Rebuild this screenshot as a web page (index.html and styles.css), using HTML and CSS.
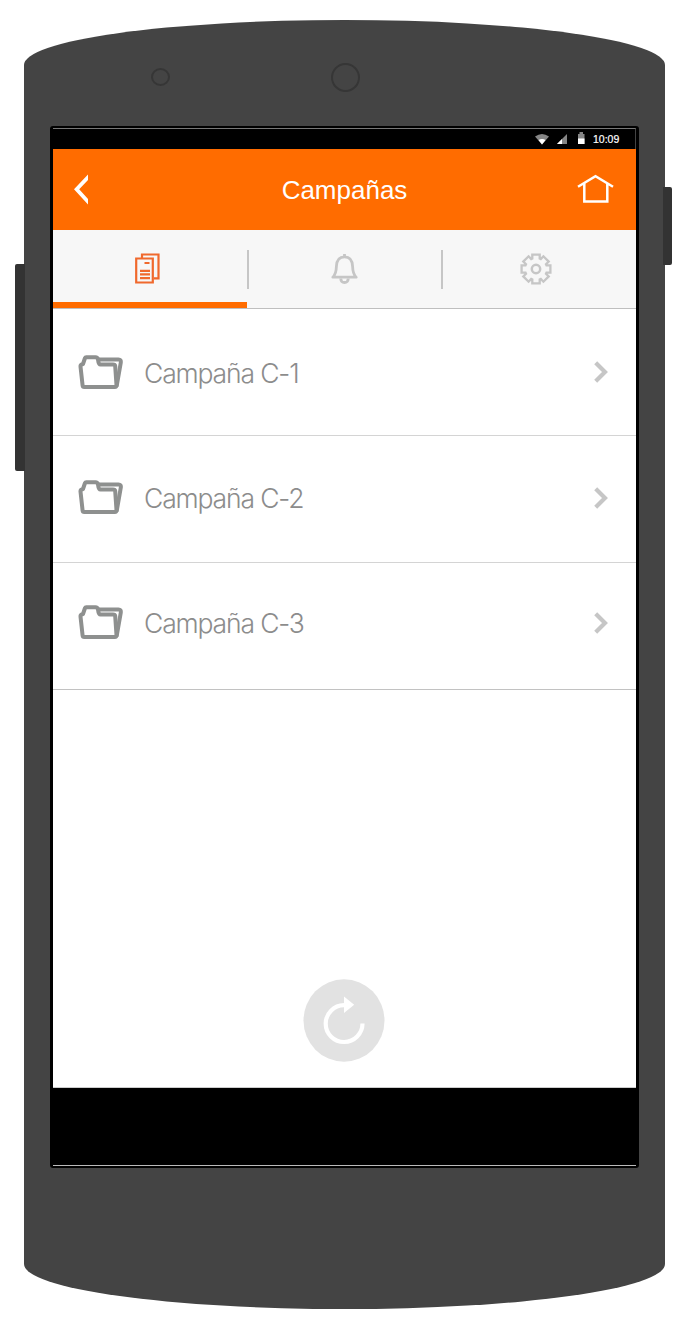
FILE: index.html
```html
<!DOCTYPE html>
<html lang="es">
<head>
<meta charset="utf-8">
<title>Campañas</title>
<link rel="stylesheet" href="styles.css">
</head>
<body>
<svg class="defs" aria-hidden="true">
  <symbol id="folder" viewBox="0 0 46 35">
    <g fill="none" stroke="#8e908f" stroke-width="4" stroke-linejoin="round">
      <path d="M20 4.400H40.500Q43.300 4.400 42.800 7.500L38.600 31.500"/>
      <path d="M2.500 11.500Q2.300 9.800 5 9L7 3Q7.300 2.300 8.200 2.300H17.500Q19.500 2.300 20 4.500Q20.500 9.500 22.500 9.500H35Q37 9.500 37.200 11L38.500 30Q38.500 32 36.800 32H6.200Q4.800 32 4.600 30.500Z"/>
    </g>
  </symbol>
  <symbol id="chevron" viewBox="0 0 14 22">
    <path d="M1.700 1.700L11 11L1.700 20.300" fill="none" stroke="#c6c6c6" stroke-width="4.200"/>
  </symbol>
</svg>
<div class="phone">
  <i class="key volume"></i>
  <i class="key power"></i>
  <i class="sensor"></i>
  <i class="camera"></i>
  <main class="screen">
    <div class="status">
      <svg class="signals" width="51" height="14" viewBox="0 0 51 14">
        <path d="M0 3.500Q7 -1.500 14 3.500L7 11.500Z" fill="#858585"/>
        <path d="M3.500 7Q7 5 10.500 7L7 11.500Z" fill="#fff"/>
        <path d="M22 11L32 1V11Z" fill="#858585"/>
        <path d="M22 11L27 6V11Z" fill="#fff"/>
        <path d="M43 1H44.500V-1H48V1H49.500V11H43Z" fill="#858585"/>
        <path d="M43 5.500H49.500V11H43Z" fill="#fff"/>
      </svg>
      <span class="clock">10:09</span>
    </div>
    <header class="bar">
      <svg class="back" width="14" height="31" viewBox="0 0 14 31"><path d="M0 15.300L14 .5V6L5.200 15.300L14 25V30.500Z" fill="#fff"/></svg>
      <h1 class="title">Campañas</h1>
      <svg class="home" width="37" height="30" viewBox="0 0 37 30"><path d="M1 11.800L18.500 1.200L36 11.800M7.300 8V26.500H30.300V8" fill="none" stroke="#fff" stroke-width="2.500"/></svg>
    </header>
    <nav class="tabs">
      <a class="tab active">
        <svg width="25" height="31" viewBox="0 0 25 31"><g fill="none" stroke="#f0692d" stroke-width="2.200"><path d="M7 5V1.500H23.500V25.300H19"/><path d="M1.200 5.500H17.800V29.500H1.200Z"/><path d="M9.500 10H14.500M5 17.800H15M5 21.400H15M5 25.200H15"/></g></svg>
      </a>
      <a class="tab">
        <svg width="27" height="31" viewBox="0 0 27 31"><g fill="none" stroke="#c6c6c6" stroke-width="2.800" stroke-linejoin="round"><path d="M1.800 23.200Q5.200 20 5.400 12.500Q5.700 2.800 13.500 2.800Q21.300 2.800 21.600 12.500Q21.800 20 25.200 23.200Z"/><path d="M13.500 0V3M9.700 24.500Q10 28.500 13.500 28.500Q17 28.500 17.300 24.500"/></g></svg>
      </a>
      <a class="tab settings">
        <svg width="32" height="32" viewBox="-16 -16 32 32"><g fill="none" stroke="#c6c6c6" stroke-width="2.300"><path d="M-3.700 -10.500V-14.400H3.700V-10.500L4.800 -10L7.400 -12.700L12.700 -7.400L10 -4.800L10.500 -3.700H14.400V3.700H10.500L10 4.800L12.700 7.400L7.400 12.700L4.800 10L3.700 10.500V14.400H-3.700V10.500L-4.800 10L-7.400 12.700L-12.700 7.400L-10 4.800L-10.500 3.700H-14.400V-3.700H-10.500L-10 -4.800L-12.700 -7.400L-7.400 -12.700L-4.800 -10Z"/><circle r="4.200" stroke-width="2.500"/></g></svg>
      </a>
    </nav>
    <ul class="list">
      <li class="row"><svg class="folder"><use href="#folder"/></svg><span class="label">Campaña C-1</span><svg class="chevron"><use href="#chevron"/></svg></li>
      <li class="row"><svg class="folder"><use href="#folder"/></svg><span class="label">Campaña C-2</span><svg class="chevron"><use href="#chevron"/></svg></li>
      <li class="row"><svg class="folder"><use href="#folder"/></svg><span class="label">Campaña C-3</span><svg class="chevron"><use href="#chevron"/></svg></li>
    </ul>
    <div class="space">
      <svg width="82" height="83" viewBox="0 0 82 83"><ellipse cx="41" cy="41.500" rx="40.500" ry="41.200" fill="#e2e2e2"/><path d="M41 26.200A18.400 18.400 0 1 0 59.500 44.500" fill="none" stroke="#fff" stroke-width="4.200"/><path d="M41 17.500L51.200 25.700L41 34Z" fill="#fff"/></svg>
    </div>
    <div class="softkeys"></div>
  </main>
</div>
</body>
</html>
```

FILE: styles.css
```css
* { box-sizing: border-box; }
body { margin: 0; background: #fff; font-family: "Liberation Sans", Arial, sans-serif; }
svg { display: block; flex: none; overflow: visible; }
.defs { position: absolute; width: 0; height: 0; overflow: hidden; }

/* Handset */
.phone {
  position: relative;
  width: 641px;
  height: 1289px;
  margin: 20px 0 0 24px;
  padding: 106px 26px 0;
  background: #444;
  border-radius: 320.5px / 45px;
}
.key { position: absolute; background: #333; }
.volume { left: -9px; top: 244px; width: 10px; height: 207px; border-radius: 2px 0 0 2px; }
.power { left: 639px; top: 167px; width: 9px; height: 78px; border-radius: 0 2px 2px 0; }
.sensor, .camera { position: absolute; border: 2px solid #363636; border-radius: 50%; }
.sensor { left: 127px; top: 48px; width: 19px; height: 18px; }
.camera { left: 307px; top: 43px; width: 29px; height: 29px; }

/* Screen */
.screen {
  display: flex;
  flex-direction: column;
  width: 589px;
  height: 1042px;
  border: solid #000;
  border-width: 2px 3px 2px;
  border-radius: 3px;
  background: #fff;
}
.status {
  display: flex;
  height: 21px;
  padding: 4px 15px 0 0;
  justify-content: flex-end;
  background: #000;
  border: solid #444;
  border-width: 1px 1px 0 0;
  border-top-color: #777;
}
.clock { margin-left: 7px; width: 27px; font-size: 10.500px; line-height: 12px; color: #fff; -webkit-text-stroke: .2px #fff; }
.bar {
  display: flex;
  align-items: center;
  justify-content: space-between;
  height: 81px;
  padding: 0 22px 0 21px;
  background: #ff6c00;
}
.title { margin: 0 0 0 24px; font-size: 26px; line-height: 30px; font-weight: 400; color: #fff; }
.tabs { display: grid; grid-template-columns: 194px 194px 195px; height: 79px; background: #f7f7f7; border-bottom: 1px solid #bfbfbf; }
.tab { position: relative; display: flex; justify-content: center; align-items: center; }
.active { border-bottom: 6px solid #ff6c00; padding-top: 5px; padding-right: 5px; }
.tab + .tab { padding-left: 1px; }
.tab.settings { padding: 0 5px 1px 0; }
.tab + .tab::before { content: ""; position: absolute; left: 0; top: 20px; width: 2px; height: 39px; background: #c6c6c6; }

/* Campaign rows */
.list { margin: 0; padding: 0; list-style: none; }
.row { display: flex; align-items: center; height: 127px; padding: 0 28px 0 25px; border-bottom: 1px solid #d4d4d4; }
.row:nth-child(1) .label { padding-top: 2px; }
.row:nth-child(2) { padding-bottom: 3px; }
.row:nth-child(3) { padding-bottom: 7px; border-color: #c2c2c2; }
.folder { width: 46px; height: 35px; }
.label { flex: 1; margin-left: 20px; font-family: Inter, "Liberation Sans", sans-serif; font-size: 26.500px; line-height: 32px; font-weight: 300; letter-spacing: -1.150px; color: #8c8c8c; }
.chevron { width: 14px; height: 22px; }
.space { display: flex; flex: 1; justify-content: center; align-items: flex-end; padding: 0 1px 25px 0; border-bottom: 1px solid #ccc; }
.softkeys { height: 78px; background: #000; border-bottom: 1px solid #bbb; }
```
